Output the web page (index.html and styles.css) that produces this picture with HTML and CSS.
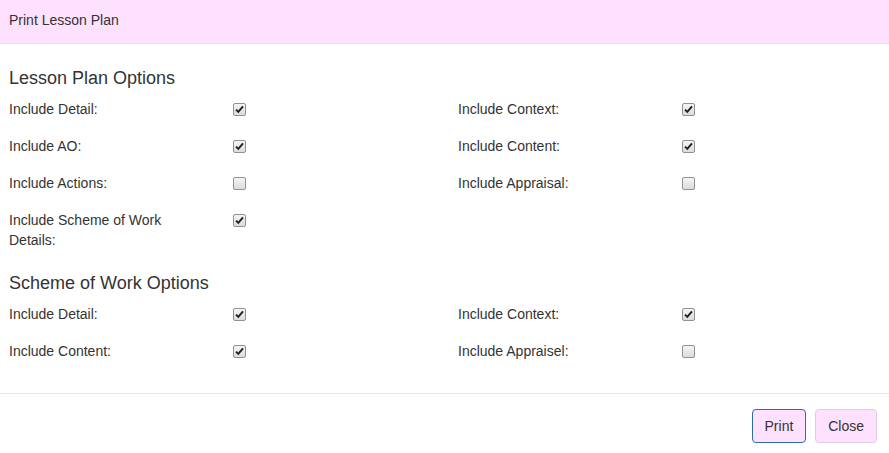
FILE: index.html
```html
<!DOCTYPE html>
<html>
<head>
    <title>Print Lesson Plan</title>
    <link rel="stylesheet" href="styles.css">
</head>
<body>
    <div class="modal">
        <div class="modal-header">
            <h4 class="modal-title">Print Lesson Plan</h4>
        </div>

        <div class="modal-body">
            <h4 class="section-title">Lesson Plan Options</h4>
            <div class="option-row">
                <label for="lpDetail">Include Detail:</label>
                <div><input type="checkbox" id="lpDetail" checked></div>
                <label for="lpContext">Include Context:</label>
                <div><input type="checkbox" id="lpContext" checked></div>
            </div>
            <div class="option-row">
                <label for="lpAO">Include AO:</label>
                <div><input type="checkbox" id="lpAO" checked></div>
                <label for="lpContent">Include Content:</label>
                <div><input type="checkbox" id="lpContent" checked></div>
            </div>
            <div class="option-row">
                <label for="lpActions">Include Actions:</label>
                <div><input type="checkbox" id="lpActions"></div>
                <label for="lpAppraisal">Include Appraisal:</label>
                <div><input type="checkbox" id="lpAppraisal"></div>
            </div>
            <div class="option-row">
                <label for="lpSow">Include Scheme of Work Details:</label>
                <div><input type="checkbox" id="lpSow" checked></div>
            </div>

            <h4 class="section-title">Scheme of Work Options</h4>
            <div class="option-row">
                <label for="sowDetail">Include Detail:</label>
                <div><input type="checkbox" id="sowDetail" checked></div>
                <label for="sowContext">Include Context:</label>
                <div><input type="checkbox" id="sowContext" checked></div>
            </div>
            <div class="option-row">
                <label for="sowContent">Include Content:</label>
                <div><input type="checkbox" id="sowContent" checked></div>
                <label for="sowAppraisel">Include Appraisel:</label>
                <div><input type="checkbox" id="sowAppraisel"></div>
            </div>
        </div>

        <div class="modal-footer">
            <button type="button" class="btn btn-print">Print</button>
            <button type="button" class="btn btn-close">Close</button>
        </div>
    </div>
</body>
</html>
```

FILE: styles.css
```css
body {
    margin: 0;
    background-color: white;
    font-family: "Liberation Sans", Arial, sans-serif;
    font-size: 14px;
    line-height: 20px;
    color: #333;
}

/* Header bar */
.modal-header {
    background-color: #fee1fe;
    height: 44px;
    padding: 10px 9px 0;
    box-sizing: border-box;
    border-bottom: 1px solid #e5e5e5;
}

.modal-title {
    margin: 0;
    font-size: 14px;
    font-weight: normal;
    line-height: 20px;
}

.modal-body {
    padding: 15px 9px 15px;
}

/* Section headings */
.section-title {
    margin: 24px 0 10px;
    font-size: 18px;
    font-weight: normal;
    line-height: 1.1;
}

.modal-body .section-title:first-child {
    margin-top: 10px;
}

/* label | checkbox | label | checkbox */
.option-row {
    display: grid;
    grid-template-columns: 224px 225px 224px auto;
    margin-bottom: 17px;
}

.option-row label {
    padding-right: 30px;
}

input[type="checkbox"] {
    appearance: none;
    -webkit-appearance: none;
    display: block;
    width: 13px;
    height: 13px;
    margin: 4px 0 0;
    border: 1px solid #919191;
    border-radius: 2px;
    box-sizing: border-box;
    background: linear-gradient(#f4f4f4, #dcdcdc);
}

input[type="checkbox"]:checked {
    background-image: url("data:image/svg+xml;utf8,<svg xmlns='http://www.w3.org/2000/svg' width='11' height='11' viewBox='0 0 11 11'><path d='M2 5.6 L4.3 7.9 L9 2.4' fill='none' stroke='%23222' stroke-width='2'/></svg>"), linear-gradient(#f4f4f4, #dcdcdc);
    background-repeat: no-repeat;
}

/* Footer */
.modal-footer {
    border-top: 1px solid #e5e5e5;
    padding: 15px 12px;
    text-align: right;
}

.btn {
    font-family: inherit;
    font-size: 14px;
    line-height: 20px;
    padding: 6px 12px;
    color: #333;
    background-color: #fee1fe;
    border: 1px solid #e4c9e4;
    border-radius: 4px;
    cursor: pointer;
}

.btn + .btn {
    margin-left: 5px;
}

.btn-print {
    border-color: #2e6da4;
}
```
